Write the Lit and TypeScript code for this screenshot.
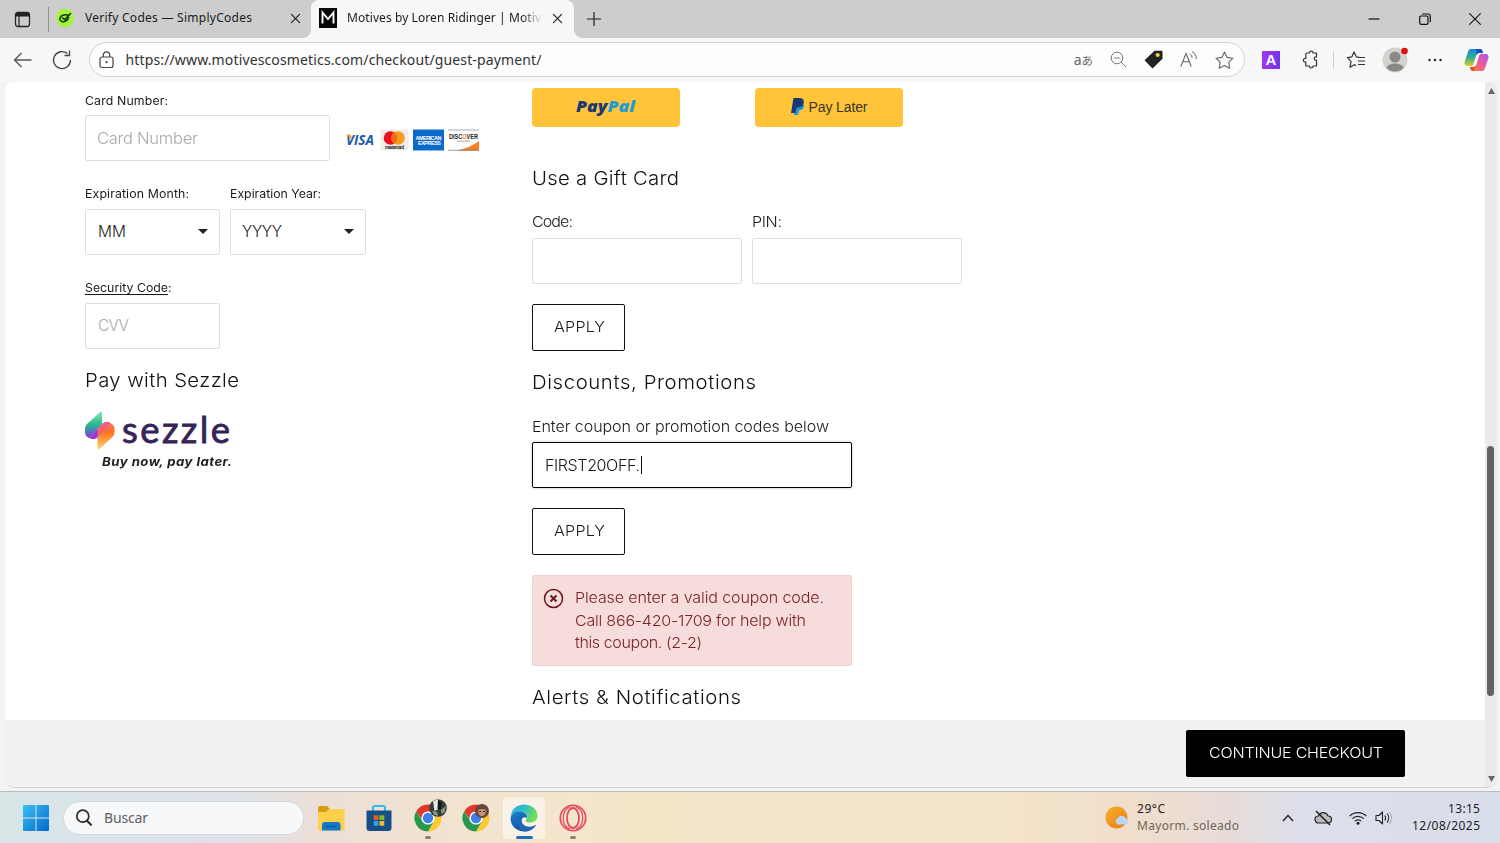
import { LitElement, html, css } from "lit";
import { customElement, property } from "lit/decorators.js";

/** A run of text tracked (and optionally widened) so that it spans a given measure. */
@customElement("fit-text")
class FitText extends LitElement {
  static styles = css`
    :host { display: inline-block; white-space: pre; text-decoration: inherit; }
    span { display: inline-block; transform-origin: 0 50%; text-decoration: inherit; text-underline-offset: 2px; }
  `;
  @property({ type: Number }) w = 0;
  @property({ type: Number }) stretch = 1;
  @property() text = "";
  render() {
    return html`<span>${this.text}</span>`;
  }
  updated() {
    const span = this.renderRoot.querySelector("span") as HTMLElement;
    span.style.letterSpacing = "0px";
    const natural = span.getBoundingClientRect().width;
    const gap = (this.w / this.stretch - natural) / Math.max(1, this.text.length - 1);
    span.style.letterSpacing = gap.toFixed(3) + "px";
    if (this.stretch !== 1) span.style.transform = `scaleX(${this.stretch})`;
    this.style.width = this.w + "px";
  }
}

const t = (text: string, w: number) => html`<fit-text .text=${text} .w=${w}></fit-text>`;
const wide = (text: string, w: number, s = 1.07) => html`<fit-text .text=${text} .w=${w} .stretch=${s}></fit-text>`;

@customElement("browser-chrome")
class BrowserChrome extends LitElement {
  static styles = css`
    :host { display: block; font-family: "Noto Sans", "Open Sans", sans-serif; color: #1b1b1b; }
    svg { display: block; flex: none; overflow: visible; }
    .tabs { height: 38px; background: #cdcdcd; display: flex; align-items: center; font-size: 12px; line-height: 36px; box-sizing: border-box; }
    .panel { margin-left: 14px; }
    .sep { width: 1px; height: 25px; background: #8e8e8e; margin: 0 7px 0 17px; }
    .tab { display: flex; align-items: center; height: 38px; padding-bottom: 2px; box-sizing: border-box; }
    .tab.one { width: 255px; }
    .tab.one fit-text { margin-left: 11px; }
    .x { margin-left: auto; }
    .tab.one .x { margin-right: 11px; }
    .tab.two { width: 263px; background: #f7f7f7; border-radius: 8px 8px 0 0; padding-left: 8px; position: relative; }
    .tab.two .x { margin-right: 12px; }
    .title { margin-left: 10px; width: 195px; overflow: hidden; -webkit-mask-image: linear-gradient(90deg, #000 175px, transparent 196px); }
    .foot { position: absolute; bottom: 0; width: 8px; height: 8px; }
    .foot.l { left: -8px; background: radial-gradient(circle at 0 0, #cdcdcd 7.5px, #f7f7f7 8px); }
    .foot.r { right: -8px; background: radial-gradient(circle at 100% 0, #cdcdcd 7.5px, #f7f7f7 8px); }
    .plus { margin-left: 13px; }
    .win { margin-left: auto; display: flex; gap: 38.500px; margin-right: 19px; align-items: center; }
    .bar { height: 43px; background: #f7f7f7; display: flex; align-items: center; padding-left: 13px; }
    .reload { margin-left: 20px; }
    .addr { margin-left: 16.500px; width: 1156.500px; height: 35px; border: 1px solid #d2d2d2; border-radius: 18px; background: #fdfdfd; box-sizing: border-box; display: flex; align-items: center; padding: 0 10px 0 9px; font-size: 14px; color: #333; }
    .addr fit-text { margin-left: 12px; }
    .tools { margin-left: auto; display: flex; align-items: center; gap: 17px; }
    .ja { display: flex; align-items: center; font: 14px/18px "Noto Sans", sans-serif; color: #666; }
    .ja b { font: 400 11.500px/18px "Noto Sans CJK JP", sans-serif; }
    .ext { width: 18px; height: 18px; background: linear-gradient(90deg, #a137f0, #7136ed); color: #fff; font: bold 15px/18px "Liberation Sans", sans-serif; text-align: center; margin-left: 17px; }
    .puz { margin-left: 22px; }
    .vs { width: 1px; height: 18px; background: #cfcfcf; margin-left: 13px; }
    .fav { margin-left: 13px; }
    .ava { margin-left: 17px; }
    .dots { margin-left: 20px; }
    .cop { margin-left: 22px; }
  `;
  render() {
    const cross = (s: number, c: string, w: number) => html`<svg width=${s} height=${s} viewBox="0 0 10 10"><path d="M.5.5l9 9M9.500.5l-9 9" stroke=${c} stroke-width=${w} fill="none" stroke-linecap="round"/></svg>`;
    return html`
      <div class="tabs">
        <svg class="panel" width="17" height="17" viewBox="0 0 17 17"><rect x="1.500" y="1.500" width="14" height="14" rx="2.500" fill="none" stroke="#222" stroke-width="1.300"/><path d="M1.500 3a2 2 0 012-1.500h10a2 2 0 012 1.500v2.500h-14z" fill="#222"/><path d="M5 4v11" stroke="#222" stroke-width="1.200"/></svg>
        <div class="sep"></div>
        <div class="tab one">
          <svg width="18" height="20" viewBox="0 0 18 20"><ellipse cx="9" cy="10" rx="8.800" ry="9.500" fill="#a4f43f"/><path d="M12.500 7.500c-3-1.500-7.500-.5-8.500 2.500-.8 3 2 4.300 4.500 3.500 2-.6 3.500-2 4-4" fill="none" stroke="#163d10" stroke-width="1.600" stroke-linecap="round"/><path d="M6.500 10l2.200 1.600L14.500 5.500" fill="none" stroke="#163d10" stroke-width="1.600" stroke-linecap="round" stroke-linejoin="round"/></svg>
          ${t("Verify Codes — SimplyCodes", 167)}
          <span class="x">${cross(9, "#222", 1.3)}</span>
        </div>
        <div class="tab two">
          <i class="foot l"></i><i class="foot r"></i>
          <svg width="18" height="20" viewBox="0 0 18 20"><rect width="18" height="20" fill="#060606"/><path d="M3.500 15.500v-11l5.500 6.500 5.500-6.500v11" fill="none" stroke="#fff" stroke-width="1.900"/></svg>
          <span class="title">${t("Motives by Loren Ridinger | Motiv", 194)}</span>
          <span class="x">${cross(9, "#222", 1.3)}</span>
        </div>
        <svg class="plus" width="14" height="14" viewBox="0 0 14 14"><path d="M7 0v14M0 7h14" stroke="#222" stroke-width="1.200"/></svg>
        <div class="win">
          <svg width="12" height="12" viewBox="0 0 12 12"><path d="M.5 6h11" stroke="#111" stroke-width="1.200"/></svg>
          <svg width="12" height="12" viewBox="0 0 12 12"><rect x=".7" y="3" width="8.300" height="8.300" rx="1.200" fill="none" stroke="#111" stroke-width="1.200"/><path d="M3 1h6a2.300 2.300 0 012.300 2.300v6" fill="none" stroke="#111" stroke-width="1.200"/></svg>
          ${cross(12, "#111", 0.9)}
        </div>
      </div>
      <div class="bar">
        <svg width="19" height="16" viewBox="0 0 19 16"><path d="M8.500 1L1.500 8l7 7M1.500 8h17" fill="none" stroke="#555" stroke-width="1.300"/></svg>
        <svg class="reload" width="20" height="20" viewBox="0 0 20 20"><path d="M18.500 10A8.500 8.500 0 1115.500 3.600M12.500 5.500h5v-5" fill="none" stroke="#444" stroke-width="1.300"/></svg>
        <div class="addr">
          <svg width="15" height="18" viewBox="0 0 15 18"><rect x="1" y="6" width="13" height="10.500" rx="2" fill="none" stroke="#444" stroke-width="1.200"/><path d="M4.300 6V4a3.200 3.200 0 016.400 0v2" fill="none" stroke="#444" stroke-width="1.200"/><circle cx="7.500" cy="11.200" r="1.100" fill="#444"/></svg>
          ${t("https://www.motivescosmetics.com/checkout/guest-payment/", 416)}
          <div class="tools">
            <span class="ja">a<b>あ</b></span>
            <svg width="17" height="17" viewBox="0 0 17 17"><circle cx="7" cy="7" r="5.800" fill="none" stroke="#777"/><path d="M4.300 7h5.400M11.300 11.300l5 5" stroke="#777" fill="none"/></svg>
            <svg width="19" height="19" viewBox="0 0 19 19"><path d="M10.500.8h7q1 0 1 1v7L8.500 18.500.5 10.300z" fill="#222"/><circle cx="13.700" cy="5" r="2.100" fill="#f5cf4c"/></svg>
            <svg width="18" height="17" viewBox="0 0 18 17"><path d="M.8 15.500L6 2.500l5.300 13M2.800 10.800h6.500" fill="none" stroke="#666" stroke-width="1.100"/><path d="M9.800 3a4.500 4.500 0 012.400 4M12 .6a8 8 0 014.300 7.500" fill="none" stroke="#666"/></svg>
            <svg width="19" height="18" viewBox="0 0 19 18"><path d="M9.500 1l2.600 5.400 5.900.8-4.300 4.200 1 5.800-5.200-2.800-5.300 2.800 1.100-5.800L1 7.200l5.900-.8z" fill="none" stroke="#666" stroke-width="1.100" stroke-linejoin="round"/></svg>
          </div>
        </div>
        <div class="ext">A</div>
        <svg class="puz" width="18" height="19" viewBox="0 0 18 19"><path d="M5 3h2.500C7 .5 11.500.5 11 3h3.500v4c-3-.8-3 3.800 0 3.200V16H11c.5 2.500-4 2.500-3.500 0H3.800v-4C.5 12.500.5 8 3.800 8.500V4.200Q3.800 3 5 3z" fill="none" stroke="#333" stroke-width="1.200" stroke-linejoin="round"/></svg>
        <div class="vs"></div>
        <svg class="fav" width="18" height="18" viewBox="0 0 18 18"><path d="M12 6.200l-2.600-.3L7 1 4.800 5.900l-4.300.7L4 10.400l-1 5.900 4.300-2.600 1.700.9" fill="none" stroke="#333" stroke-width="1.200" stroke-linejoin="round"/><path d="M11 6.500h7M11 10h7M11 13.500h7" stroke="#333" stroke-width="1.200"/></svg>
        <svg class="ava" width="26" height="26" viewBox="0 0 26 26"><circle cx="13" cy="13" r="12.500" fill="#d4d2cf"/><circle cx="13" cy="10" r="5.500" fill="#8b8986"/><path d="M4.500 21c1-6 16-6 17 0a12 12 0 01-17 0z" fill="#8b8986"/><circle cx="22.500" cy="4" r="3.300" fill="#e10f12"/></svg>
        <svg class="dots" width="14" height="4" viewBox="0 0 14 4"><g fill="#222"><circle cx="1.500" cy="2" r="1.200"/><circle cx="7" cy="2" r="1.200"/><circle cx="12.500" cy="2" r="1.200"/></g></svg>
        <svg class="cop" width="25" height="24" viewBox="0 0 25 24">
          <defs>
            <linearGradient id="c1" x1="0" y1="0" x2="0" y2="1"><stop offset="0" stop-color="#1688e0"/><stop offset=".5" stop-color="#2fb08c"/><stop offset="1" stop-color="#e8cb26"/></linearGradient>
            <linearGradient id="c2" x1="1" y1="0" x2="0" y2="1"><stop offset="0" stop-color="#a35bf3"/><stop offset=".5" stop-color="#ee5a99"/><stop offset="1" stop-color="#fa8a35"/></linearGradient>
          </defs>
          <path d="M7 1h9c2 0 2.500 2 3 4h-4c-2 0-2.500 1.500-3 3l-2.500 8c-.5 1.500-1 2-2.500 2H3c-2 0-3-2-2.300-4.500L4 4c.6-2 1.400-3 3-3z" fill="url(#c1)"/>
          <path d="M12 1h4c2 0 2.500 2 3 4h-4c-1.500 0-2.200 1-2.700 2.200z" fill="#1550c8"/>
          <path d="M18 23H9c-2 0-2.500-2-3-4h3.500c2 0 2.500-1.500 3-3L15 8c.5-1.500 1-2 2.500-2H22c2 0 3 2 2.300 4.500L21 20c-.6 2-1.400 3-3 3z" fill="url(#c2)"/>
          <path d="M6 19h3.500c1.500 0 2.200-1 2.700-2.200L10.500 23H9c-2 0-2.500-2-3-4z" fill="#e2502c"/>
          <path d="M14.500 7.500l-2.700 9h-1.600l2.700-9z" fill="#fff"/>
        </svg>
      </div>
    `;
  }
}

@customElement("checkout-page")
class CheckoutPage extends LitElement {
  static styles = css`
    :host { display: grid; grid-template-columns: 1480px 12px; grid-template-rows: 638px 67px; margin-left: 5px; width: 1492px; border-bottom: 1px solid #cfd3d6; border-radius: 8px 8px 10px 10px; overflow: hidden; background: #fff; font-family: Inter, "Open Sans", sans-serif; font-weight: 300; color: #1a1a1a; }
    svg { display: block; flex: none; overflow: visible; }
    .body { display: grid; grid-template-columns: 447px 1fr; padding: 6px 0 0 80px; box-sizing: border-box; overflow: hidden; }
    .col { display: flex; flex-direction: column; align-items: flex-start; }
    .lab { font-size: 11.500px; line-height: 20px; height: 20px; font-weight: 400; display: flex; }
    .left .lab.top { margin-top: 3px; }
    .lab.b { font-size: 15px; font-weight: 300; line-height: 21px; }
    .box { box-sizing: border-box; height: 46px; border: 1px solid #dedede; border-radius: 2px; display: flex; align-items: center; padding: 0 11px 2px; font-size: 15.500px; background: #fff; }
    .card { width: 245px; color: #aaa; padding-bottom: 0; }
    .cards { display: flex; gap: 4px; margin: 4px 0 0 16px; align-items: center; }
    .sm { width: 135px; padding-left: 12px; }
    .sm.gray { color: #aaa; }
    .sm svg { margin-left: auto; }
    .sm.wide { width: 136px; padding-left: 11px; }
    .row { display: flex; align-items: center; }
    .row .lab, .row .box { flex: none; }
    h2 { margin: 0; font-weight: 300; font-size: 19px; line-height: 26px; height: 24px; color: #111; }
    .g4 { margin-top: 4px; }
    .g5 { margin-top: 5px; }
    .g6 { margin-top: 6px; }
    .g7 { margin-top: 7px; }
    .g19 { margin-top: 19px; }
    .g20 { margin-top: 20px; }
    .g22 { margin-top: 22px; }
    .g23 { margin-top: 23px; }
    .ga { margin-top: 39px; }
    .gb { margin-top: 21px; }
    .gap { margin-left: 10px; }
    .under { text-decoration: underline; text-underline-offset: 2px; }
    .el { width: 145px; }
    .er { width: 120px; }
    .brand { margin-top: 20px; }
    .slogan { font: italic 700 12px/16px Inter, sans-serif; margin: 4px 0 0 17px; color: #222; }
    .pp { width: 148px; height: 39px; background: #ffc439; border-radius: 4px; display: flex; align-items: center; justify-content: center; color: #3a3528; }
    .pp + .pp { margin-left: 75px; }
    .pp svg { margin-top: -2px; }
    .pp fit-text { font: 400 14px/18px "Liberation Sans", sans-serif; margin: -2px 0 0 4px; }
    .gift { width: 210px; }
    .gift + .gift { margin-left: 10px; }
    .btn { box-sizing: border-box; width: 93px; height: 47px; border: 1px solid #111; border-radius: 2px; display: flex; align-items: center; justify-content: center; font-size: 15px; padding: 0 0 3px 1px; }
    .coupon { width: 320px; border: 1px solid #000; box-shadow: 0 0 3px #bbb; padding: 0 12px; }
    .caret { width: 1px; height: 18px; background: #111; margin-left: 1px; }
    .alert { box-sizing: border-box; width: 320px; height: 91px; background: #f7dcdc; border: 1px solid #f3cfd1; border-radius: 2px; margin-top: 20px; padding: 11px 0 0 10px; display: flex; align-items: flex-start; color: #7a2325; }
    .alert svg { margin-top: 1px; }
    .lines { display: flex; flex-direction: column; margin-left: 11px; font-size: 15px; line-height: 22.700px; }
    .foot { background: #f1f1f1; display: flex; justify-content: flex-end; padding: 10px 80px 0 0; }
    .go { box-sizing: border-box; width: 219px; height: 47px; background: #000; color: #fff; border-radius: 2px; display: flex; align-items: center; justify-content: center; font-size: 15px; padding-bottom: 2px; }
    .scroll { grid-column: 2; grid-row: 1 / 3; background: #ebebeb; display: flex; flex-direction: column; align-items: center; padding: 6px 0 5px; box-sizing: border-box; }
    .thumb { width: 7px; height: 250px; border-radius: 4px; background: #636363; margin: 352px 1px 0 0; }
    .dn { margin-top: auto; }
  `;
  render() {
    const arrow = html`<svg width="10" height="5" viewBox="0 0 10 5"><path d="M0 0h10L5 5z" fill="#222"/></svg>`;
    return html`
      <div class="body">
        <div class="col left">
          <div class="lab top">${wide("Card Number:", 83)}</div>
          <div class="row g4">
            <div class="box card">${wide("Card Number", 101)}</div>
            <div class="cards">
              <svg width="30" height="22" viewBox="0 0 30 22"><text x="0" y="16" textLength="28" lengthAdjust="spacingAndGlyphs" font-family="Open Sans" font-style="italic" font-weight="700" font-size="14.500" fill="#1c5ba8">VISA</text><path d="M0 5.500h4.500l2 5z" fill="#eba335"/></svg>
              <svg width="29" height="22" viewBox="0 0 29 22"><rect x=".5" y=".5" width="28" height="21" fill="#efecea"/><circle cx="10.500" cy="9" r="6.800" fill="#e8101e"/><circle cx="18" cy="9" r="6.800" fill="#f79c1c"/><path d="M14.250 3.300a6.800 6.800 0 010 11.400 6.800 6.800 0 010-11.400z" fill="#f56a13"/><text x="5" y="19.500" textLength="19" font-family="Liberation Sans" font-weight="700" font-size="4.500" fill="#222">mastercard</text></svg>
              <svg width="31" height="22" viewBox="0 0 31 22"><rect y=".5" width="31" height="21" fill="#0c6acc"/><text x="2.500" y="11" textLength="26" font-family="Liberation Sans" font-weight="700" font-size="5.500" fill="#fff">AMERICAN</text><text x="5" y="16" textLength="23" font-family="Liberation Sans" font-weight="700" font-size="5.500" fill="#fff">EXPRESS</text></svg>
              <svg width="31" height="22" viewBox="0 0 31 22"><rect y=".5" width="31" height="21" fill="#fff"/><path d="M0 1h31" stroke="#aaa"/><path d="M31 12v9.500H8Q22 19 31 12z" fill="#f58225"/><path d="M0 21.300h31" stroke="#777" stroke-width=".7"/><text x="1" y="10" textLength="29" lengthAdjust="spacingAndGlyphs" font-family="Liberation Sans" font-weight="700" font-size="6.500" fill="#222">DISC<tspan fill="#f58225">O</tspan>VER</text><path d="M9 12.200h13" stroke="#999" stroke-width=".8"/></svg>
            </div>
          </div>
          <div class="row g23"><div class="lab el">${wide("Expiration Month:", 104)}</div><div class="lab er">${wide("Expiration Year:", 91)}</div></div>
          <div class="row g5">
            <div class="box sm">${wide("MM", 28, 1)}${arrow}</div>
            <div class="box sm wide gap">${wide("YYYY", 40, 1)}${arrow}</div>
          </div>
          <div class="lab g23"><span class="under">${wide("Security Code", 83)}</span>:</div>
          <div class="box sm gray g5">${wide("CVV", 31, 1)}</div>
          <h2 class="g19">${wide("Pay with Sezzle", 154)}</h2>
          <svg class="brand" width="148" height="38" viewBox="0 0 148 38">
            <defs>
              <linearGradient id="s1" x1="0" y1="1" x2="0" y2="0"><stop offset="0" stop-color="#8333d4"/><stop offset=".3" stop-color="#4e80bd"/><stop offset=".5" stop-color="#24b98b"/><stop offset="1" stop-color="#8be4bd"/></linearGradient>
              <linearGradient id="s2" x1="0" y1="0" x2="0" y2="1"><stop offset="0" stop-color="#fb6d72"/><stop offset=".35" stop-color="#ff741c"/><stop offset="1" stop-color="#fdd470"/></linearGradient>
            </defs>
            <path d="M17 1v11L4 26q-4-2-4-6v-3q0-3 2-5L14 1q3-2.500 3 0z" fill="url(#s1)"/>
            <path d="M12.500 36V25.500L25.500 11q4 2 4 6v3q0 3-2 5l-12 11q-3 2.500-3 0z" fill="url(#s2)"/>
            <path d="M4 26q4.500 2.500 8.500-.500L25.500 11q-4.500-2.500-8.500 1z" fill="#963ccc"/>
            <path d="M12.500 25.500v-8.500L17 12q4-3.500 8.500-1z" fill="#f4606f"/>
            <text x="37" y="30.500" textLength="108" lengthAdjust="spacing" font-family="Lato" font-weight="400" font-size="36.500" fill="#352458" stroke="#352458" stroke-width=".8">sezzle</text>
          </svg>
          <div class="slogan">${wide("Buy now, pay later.", 130, 1.1)}</div>
        </div>
        <div class="col">
          <div class="row">
            <div class="pp"><svg width="62" height="22" viewBox="0 0 62 22"><text x="1" y="16" textLength="59" lengthAdjust="spacingAndGlyphs" font-family="Open Sans" font-style="italic" font-weight="800" font-size="16" fill="#1b3872">Pay<tspan fill="#219bd2">Pal</tspan></text></svg></div>
            <div class="pp"><svg width="14" height="18" viewBox="0 0 14 18"><path d="M5 5h6c3 1 3 7-3 7.500L7 17H3z" fill="#179bd7"/><path d="M2.500 0h6c4 0 5 3 4 6-1 2.800-3 3.700-7 3.700L4.500 15H0z" fill="#1b3872"/></svg>${t("Pay Later", 59)}</div>
          </div>
          <h2 class="ga">${wide("Use a Gift Card", 147)}</h2>
          <div class="row gb"><div class="lab b gift">${wide("Code:", 41)}</div><div class="lab b gift">${wide("PIN:", 30)}</div></div>
          <div class="row g7"><div class="box gift"></div><div class="box gift"></div></div>
          <div class="btn g20">${wide("APPLY", 51)}</div>
          <h2 class="g19">${wide("Discounts, Promotions", 224)}</h2>
          <div class="lab b g22">${wide("Enter coupon or promotion codes below", 297)}</div>
          <div class="box coupon g6">${wide("FIRST20OFF.", 95, 1.04)}<i class="caret"></i></div>
          <div class="btn g20">${wide("APPLY", 51)}</div>
          <div class="alert">
            <svg width="21" height="21" viewBox="0 0 21 21"><circle cx="10.500" cy="10.500" r="9" fill="none" stroke="#6b1a1d" stroke-width="1.500"/><path d="M7.500 7.500l6 6M13.500 7.500l-6 6" stroke="#6b1a1d" stroke-width="2"/></svg>
            <div class="lines">${wide("Please enter a valid coupon code.", 249)}${wide("Call 866-420-1709 for help with", 231)}${wide("this coupon. (2-2)", 127)}</div>
          </div>
          <h2 class="g19">${wide("Alerts & Notifications", 209)}</h2>
        </div>
      </div>
      <div class="foot"><div class="go">${wide("CONTINUE CHECKOUT", 174)}</div></div>
      <div class="scroll">
        <svg width="7" height="6" viewBox="0 0 7 6"><path d="M3.500 0L7 6H0z" fill="#666"/></svg>
        <div class="thumb"></div>
        <svg class="dn" width="7" height="6" viewBox="0 0 7 6"><path d="M3.500 6L7 0H0z" fill="#666"/></svg>
      </div>
    `;
  }
}

@customElement("task-bar")
class TaskBar extends LitElement {
  static styles = css`
    :host { height: 52px; box-sizing: border-box; border-top: 1px solid #b9bcbf; display: flex; align-items: center; padding-left: 23px; font-family: "Noto Sans", "Open Sans", sans-serif; font-size: 12px; color: #222;
      background: linear-gradient(90deg, #d8e6e8 0, #dae3ea 120px, #dee1e9 240px, #ecdfd6 320px, #f2e3d0 450px, #f5e6ca 620px, #f4e4c9 1000px, #f0decc 1140px, #e7dbd8 1230px, #dcdfea 1300px, #d9deeb 1500px); }
    svg { display: block; overflow: visible; flex: none; }
    .search { margin-left: 14px; width: 241px; height: 34px; border-radius: 17px; background: #f7f8fa; border: 1px solid #d5d8db; box-sizing: border-box; display: flex; align-items: center; padding-left: 11px; font-size: 14px; color: #5e5e5e; gap: 12px; }
    .apps { display: flex; margin-left: 3px; }
    .app { width: 42px; height: 42px; margin: 0 3.150px; border-radius: 4px; display: flex; flex-direction: column; align-items: center; position: relative; padding-top: 7px; box-sizing: border-box; }
    .app.on { background: #faf2e7; }
    .pill { position: absolute; bottom: 0; width: 6px; height: 3px; border-radius: 2px; background: #8b8378; }
    .on .pill { width: 17px; background: #1a6fc0; }
    .weather { margin-left: auto; display: flex; align-items: center; gap: 7px; }
    .two { display: flex; flex-direction: column; line-height: 17px; margin-top: -1px; }
    .dim { color: #6d665f; }
    .up { margin-left: 43px; }
    .cloud { margin-left: 20px; }
    .wifi { margin-left: 17px; }
    .vol { margin-left: 8px; }
    .clock { align-items: flex-end; margin: -1px 20px 0 20px; }
  `;
  render() {
    const chrome = (who: unknown) => html`<svg width="28" height="28" viewBox="0 0 28 28">
      <path d="M14 7.500h11.800A13.500 13.500 0 0114 27.500l5.600-10z" fill="#fcc934"/><path d="M2.300 7.200A13.500 13.500 0 0014 27.500l5.600-9.800L8.400 17z" fill="#27994a"/><path d="M2.300 7.200A13.500 13.500 0 0125.800 7.500H14l-5.500 9z" fill="#e0392c"/>
      <circle cx="14" cy="14" r="6.600" fill="#fff"/><circle cx="14" cy="14" r="5.200" fill="#3d80ea"/>${who}</svg>`;
    return html`
      <svg width="26" height="26" viewBox="0 0 26 26"><defs><linearGradient id="w" x1="0" y1="0" x2="1" y2="1"><stop offset="0" stop-color="#39c0f5"/><stop offset="1" stop-color="#0568c8"/></linearGradient></defs><path d="M1 0h11.500v12.500H0V1q0-1 1-1zM13.500 0H25q1 0 1 1v11.500H13.500zM0 13.500h12.500V26H1q-1 0-1-1zM13.500 13.500H26V25q0 1-1 1H13.500z" fill="url(#w)"/></svg>
      <div class="search">
        <svg width="17" height="17" viewBox="0 0 17 17"><circle cx="7.800" cy="7.200" r="6" fill="none" stroke="#2b2b2b" stroke-width="1.700"/><path d="M12 11.700l4 4" stroke="#2b2b2b" stroke-width="2.200" stroke-linecap="round"/></svg>
        ${t("Buscar", 44)}
      </div>
      <div class="apps">
        <div class="app"><svg width="28" height="28" viewBox="0 0 28 28"><path d="M1 4q0-2 2-2h7l3 3-3 5H1z" fill="#d99a14"/><path d="M1 8h8l3-3h14q1.500 0 1.500 1.500V25q0 1.500-1.500 1.500H2.500Q1 26.500 1 25z" fill="#fdd04c"/><path d="M5 26.500V21q0-3 3-3h12.500q3 0 3 3v5.500z" fill="#1479c9"/><path d="M9 22.500h10.500" stroke="#0c5aa2" stroke-width="1.500"/></svg></div>
        <div class="app"><svg width="28" height="28" viewBox="0 0 28 28"><path d="M8 8V4q0-2 2-2h8q2 0 2 2v4" fill="none" stroke="#35b8ea" stroke-width="2.200"/><path d="M1.500 6.500h25V24q0 3-3 3h-19q-3 0-3-3z" fill="#164f85"/><path d="M8.700 11.300h4.800v4.700H8.700z" fill="#ef5a2a"/><path d="M14.500 11.300h4.800v4.700h-4.800z" fill="#84ba2b"/><path d="M8.700 17h4.800v4.700H8.700z" fill="#2aa5e8"/><path d="M14.500 17h4.800v4.700h-4.800z" fill="#fdbd1b"/></svg></div>
        <div class="app">${chrome(html`<svg x="15" y="-5" width="18" height="18" viewBox="0 0 18 18"><circle cx="9" cy="9" r="8.800" fill="#373c3a"/><path d="M4 2l5-1.500v10l-3.500 1.500z" fill="#dfeaec"/><path d="M9 1l4 3-1.500 7-3-1z" fill="#15181a"/><path d="M3 12l5 1 1 4-4-1.500zM12 11l5-4-1.500 6-3 2z" fill="#8b9a84"/></svg>`)}<i class="pill"></i></div>
        <div class="app">${chrome(html`<svg x="13" y="0" width="14" height="14" viewBox="0 0 14 14"><circle cx="7" cy="7" r="7" fill="#67483c"/><path d="M3 6q4-2 8 0 0 6-4 6T3 6z" fill="#c89478"/><path d="M4 7.500h2M8 7.500h2" stroke="#3a2722"/></svg>`)}</div>
        <div class="app on"><svg width="28" height="28" viewBox="0 0 28 28"><defs><linearGradient id="e1" x1="0" y1="0" x2="1" y2=".4"><stop offset="0" stop-color="#2fa9df"/><stop offset=".5" stop-color="#2cc1c9"/><stop offset="1" stop-color="#6fdd55"/></linearGradient><linearGradient id="e2" x1="0" y1="0" x2=".6" y2="1"><stop offset="0" stop-color="#1880d2"/><stop offset="1" stop-color="#104f9e"/></linearGradient></defs><path d="M.8 12C2 4 8 .5 14 .5c8 0 13.500 5.500 13.500 11 0 5-4 7-7.500 7-4 0-5-1.500-3.700-3 2-2.500 1-6.500-3-7.500C8 7 2.500 9 .8 12z" fill="url(#e1)"/><path d="M.6 14C1 10 5.500 7.300 10 7.500c5 .2 8 3.500 6.800 6.800-1-1.500-4-1.300-5 1.200-1.300 3.500 2.500 7.500 7.200 7.500 3 0 5.500-1.500 7-2-3 5-8 6.800-12.500 6.500C5.500 27 0 20.500.6 14z" fill="url(#e2)"/><path d="M8 12c-3 5-.5 12.500 6.500 15.300 5 .2 9.500-2.500 11.500-6.300-6 3.500-14 2-14.500-4.500z" fill="#2166b5"/></svg><i class="pill"></i></div>
        <div class="app"><svg width="28" height="28" viewBox="0 0 28 28"><g fill="none" stroke="#e9485f"><circle cx="14" cy="14" r="12.700" stroke-width="1.700"/><ellipse cx="14" cy="14" rx="6" ry="10" stroke-width="1.800"/><path d="M11 3c-9 3-9 19 0 22M17 3c9 3 9 19 0 22" stroke-width="1.300"/></g></svg><i class="pill"></i></div>
      </div>
      <div class="weather">
        <svg width="25" height="24" viewBox="0 0 25 24"><defs><linearGradient id="sun" x1="0" y1="0" x2="1" y2="1"><stop offset="0" stop-color="#f8b02d"/><stop offset="1" stop-color="#ea7b16"/></linearGradient></defs><circle cx="11.500" cy="11.500" r="11" fill="url(#sun)"/><path d="M13 18.500a3.500 3.500 0 010-6.500 4 4 0 017.300 0 3.300 3.300 0 010 6.500z" fill="#b9d7f8"/></svg>
        <div class="two"><span>${t("29°C", 28)}</span><span class="dim">${t("Mayorm. soleado", 102)}</span></div>
      </div>
      <svg class="up" width="12" height="8" viewBox="0 0 12 8"><path d="M1 7l5-5.500L11 7" fill="none" stroke="#222" stroke-width="1.400"/></svg>
      <svg class="cloud" width="18" height="15" viewBox="0 0 18 15"><path d="M4.500 13a3.500 3.500 0 010-7A5 5 0 0114 6a3.500 3.500 0 010 7z" fill="#bbb" stroke="#222" stroke-width="1.200"/><path d="M2 1l14 14" stroke="#222" stroke-width="1.600"/></svg>
      <svg class="wifi" width="18" height="14" viewBox="0 0 18 14"><g fill="none" stroke="#222" stroke-width="1.200"><path d="M.7 5a11.800 11.800 0 0116.600 0M3.300 7.700a8 8 0 0111.400 0M5.800 10.200a4.500 4.500 0 016.400 0"/></g><circle cx="9" cy="12.300" r="1.500" fill="#222"/></svg>
      <svg class="vol" width="17" height="14" viewBox="0 0 17 14"><path d="M1 4.500h3L7.500 1v12L4 9.500H1z" fill="none" stroke="#222" stroke-width="1.100" stroke-linejoin="round"/><path d="M9.700 4.500a4 4 0 010 5M12 2.500a7 7 0 010 9" fill="none" stroke="#222" stroke-width="1.100"/><path d="M14.300.8a10 10 0 010 12.400" fill="none" stroke="#aaa"/></svg>
      <div class="two clock"><span>${t("13:15", 32)}</span><span>${t("12/08/2025", 68)}</span></div>
    `;
  }
}

@customElement("app-root")
class AppRoot extends LitElement {
  static styles = css`
    :host { display: flex; flex-direction: column; width: 1500px; height: 843px; background: #f3f3f3; overflow: hidden; }
    .main { height: 710px; padding-top: 1px; box-sizing: border-box; }
  `;
  render() {
    return html`<browser-chrome></browser-chrome><div class="main"><checkout-page></checkout-page></div><task-bar></task-bar>`;
  }
}
